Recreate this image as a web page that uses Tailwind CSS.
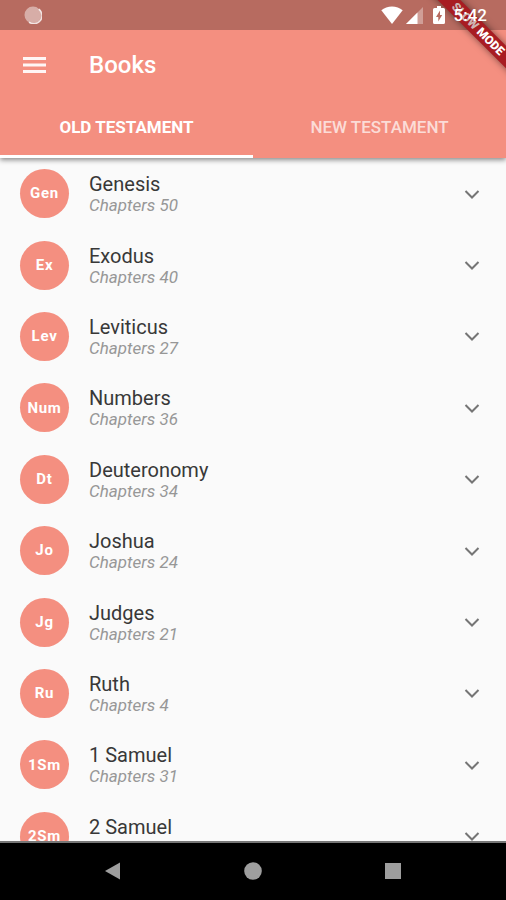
<!DOCTYPE html>
<html lang="en">
<head>
<meta charset="utf-8">
<meta name="viewport" content="width=device-width, initial-scale=1">
<title>Books</title>
<script src="https://cdn.jsdelivr.net/npm/@tailwindcss/browser@4"></script>
</head>
<body class="relative flex h-screen flex-col overflow-hidden bg-[#fafafa] font-[Roboto,sans-serif]">

  <header class="relative z-10 shrink-0 bg-[#f48f80] text-white shadow-[0_2px_5px_rgba(0,0,0,0.45)]">
    <div class="flex h-[30px] items-center justify-between bg-[#b76b60] pr-[19px] pl-6">
      <svg class="size-[18px]" viewBox="0 0 18 18" aria-hidden="true">
        <circle cx="9" cy="9" r="8.5" fill="#fff" fill-opacity=".45"/>
        <path d="M14.800 3.200A8 8 0 0 1 5 16.100" fill="none" stroke="#fff" stroke-opacity=".8" stroke-width="1.500"/>
      </svg>
      <div class="relative z-20 flex items-center">
        <svg class="h-[18px] w-[22px]" viewBox="0 0 22 18" fill="#fff" aria-hidden="true"><path d="M11 18 .3 4.300C6-.9 16-.9 21.700 4.300Z"/></svg>
        <svg class="ml-[3px] size-[17px]" viewBox="0 0 17 17" fill="#fff" aria-hidden="true"><path d="M17 0v17H0Z" fill-opacity=".35"/><path d="M11.500 5.500V17H0Z"/></svg>
        <svg class="ml-[10px] h-[18px] w-[12px]" viewBox="0 0 12 18" aria-hidden="true"><path d="M4 0h4v2h2.500Q12 2 12 3.500v13Q12 18 10.500 18h-9Q0 18 0 16.500v-13Q0 2 1.500 2H4Z" fill="#fff"/><path d="M7 4.500 3 11h2.300v4.500L9.200 9H7Z" fill="#b76b60"/></svg>
        <span class="ml-[9px] text-[17px] leading-5 font-medium">5:42</span>
      </div>
    </div>
    <div class="flex h-[70px] items-center gap-[42px] px-[23px]">
      <button type="button" aria-label="Open menu">
        <svg class="h-[18px] w-6" viewBox="0 0 24 18" fill="#fff" fill-opacity=".92" aria-hidden="true"><path d="M0 1h23v3H0zM0 7.500h23v3H0zM0 14h23v3H0z"/></svg>
      </button>
      <h1 class="text-2xl font-medium">Books</h1>
    </div>
    <div class="flex h-[58px] text-[17px] font-bold" role="tablist">
      <button type="button" role="tab" aria-selected="true" class="flex-1 border-b-3 border-white">OLD TESTAMENT</button>
      <button type="button" role="tab" aria-selected="false" class="flex-1 border-b-3 border-transparent font-medium text-white/70">NEW TESTAMENT</button>
    </div>
    <div class="pointer-events-none absolute top-0 right-0 z-10 size-20 overflow-hidden">
      <div class="absolute top-[21px] -right-[42px] w-[140px] rotate-45 bg-[#a81c22] text-center text-[12px] leading-4 font-black text-white shadow-[0_0_7px_rgba(0,0,0,0.5)]"><span class="text-[#cdb4b2]">SLOW</span> MODE</div>
    </div>
  </header>

  <main class="min-h-0 flex-1 overflow-hidden">
    <ul id="books" class="grid min-h-[714px] auto-rows-fr"></ul>
  </main>

  <nav class="flex h-[59px] shrink-0 items-center justify-center gap-[116px] border-t-2 border-[#777] bg-black" aria-label="System">
    <button type="button" aria-label="Back"><svg class="size-6" viewBox="0 0 24 24" fill="#9e9e9e"><path d="M4 11 19 2.500v17Z"/></svg></button>
    <button type="button" aria-label="Home"><svg class="size-6" viewBox="0 0 24 24" fill="#9e9e9e"><circle cx="12" cy="11" r="8.800"/></svg></button>
    <button type="button" aria-label="Recent apps"><svg class="size-6" viewBox="0 0 24 24" fill="#9e9e9e"><path d="M4 3h16v16H4z"/></svg></button>
  </nav>

<script>
  const books = [
    ["Gen", "Genesis", 50], ["Ex", "Exodus", 40], ["Lev", "Leviticus", 27],
    ["Num", "Numbers", 36], ["Dt", "Deuteronomy", 34], ["Jo", "Joshua", 24],
    ["Jg", "Judges", 21], ["Ru", "Ruth", 4], ["1Sm", "1 Samuel", 31], ["2Sm", "2 Samuel", 24]
  ];
  document.getElementById("books").innerHTML = books.map(([abbr, name, chapters]) => `
    <li>
      <button type="button" aria-expanded="false" class="flex size-full items-center gap-5 px-5 text-left">
        <span class="flex size-[49px] shrink-0 items-center justify-center rounded-full bg-[#f48f80] text-[15px] font-bold tracking-wider text-white">${abbr}</span>
        <span class="flex flex-1 flex-col pt-[2px]">
          <span class="text-xl leading-[22px] text-[#383838]">${name}</span>
          <span class="text-[17px] leading-[21px] text-[#979797] italic">Chapters ${chapters}</span>
        </span>
        <svg class="mr-[6px] h-4 w-4" viewBox="0 0 16 16" fill="none" stroke="#757575" stroke-width="2" aria-hidden="true"><path d="m1.500 5 6.500 6.500 6.500-6.500"/></svg>
      </button>
    </li>`).join("");
</script>
</body>
</html>
